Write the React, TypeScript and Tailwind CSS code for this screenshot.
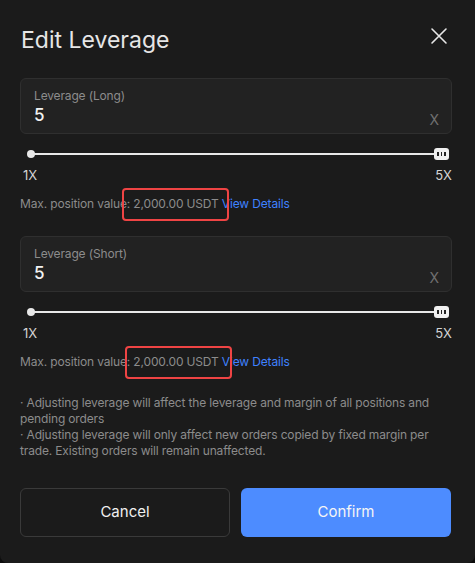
import React from "react";

function Slider() {
  return (
    <div className="relative h-[12px] mt-[14px] mx-[10px] mr-[3px]">
      <div className="absolute left-0 right-[4px] top-[5px] h-[2px] bg-[#e8e8e8]" />
      <div className="absolute left-[-3px] top-[2px] w-[8px] h-[8px] rounded-full bg-[#e8e8e8]" />
      <div className="absolute right-[0px] top-0 w-[15px] h-[12px] rounded-[3px] bg-[#f0f0f0] flex items-center justify-center gap-[2px]">
        <span className="w-[1.5px] h-[4px] bg-[#222]" />
        <span className="w-[1.5px] h-[4px] bg-[#222]" />
        <span className="w-[1.5px] h-[4px] bg-[#222]" />
      </div>
    </div>
  );
}

function Section({ label, redLeft }: { label: string; redLeft: number }) {
  return (
    <div>
      <div className="h-[56px] rounded-[6px] border border-[#2f2f2f] bg-[#222222] pl-[13px] pr-[12px] pt-[9px] flex flex-col">
        <div className="text-[12px] leading-[16px] text-[#8c8c8c] tracking-[-0.15px]">{label}</div>
        <div className="flex items-end justify-between">
          <span className="text-[17px] leading-[22px] font-medium text-[#f2f2f2]">5</span>
          <span className="text-[14px] leading-[16px] text-[#6f6f6f] mb-[-2px]">X</span>
        </div>
      </div>
      <Slider />
      <div className="flex justify-between mt-[7px] px-[3px] text-[13px] leading-[16px] text-[#d4d4d4]">
        <span>1X</span>
        <span className="mr-[-3px]">5X</span>
      </div>
      <div className="relative mt-[13px] text-[12px] leading-[16px] text-[#8c8c8c] tracking-[-0.15px]">
        Max. position value: 2,000.00 USDT <span className="text-[#3f82ff]">View Details</span>
        <div
          className="absolute top-[-8px] h-[33px] w-[107px] rounded-[4px] border-2 border-[#ef4444]"
          style={{ left: redLeft }}
        />
      </div>
    </div>
  );
}

export default function App() {
  return (
    <div
      className="w-[475px] h-[563px] bg-[#0d0d0d]"
      style={{ fontFamily: "Inter, 'Noto Sans', sans-serif" }}
    >
      <div className="w-[475px] h-[563px] bg-[#1b1b1b] rounded-b-[8px] pl-[20px] pr-[23px] flex flex-col">
        <div className="flex items-center justify-between pt-[20px] h-[60px]">
          <h1 className="text-[23px] leading-[30px] text-[#e6e6e6] pl-[1px]">Edit Leverage</h1>
          <svg width="18" height="18" viewBox="0 0 18 18" className="mr-[4px] mt-[-8px]">
            <path d="M2 2L16 16M16 2L2 16" stroke="#e8e8e8" strokeWidth="1.6" strokeLinecap="round" />
          </svg>
        </div>
        <div className="mt-[18px]">
          <Section label="Leverage (Long)" redLeft={102} />
        </div>
        <div className="mt-[24px]">
          <Section label="Leverage (Short)" redLeft={105} />
        </div>
        <div className="mt-[25px] text-[12px] leading-[16px] text-[#8c8c8c] tracking-[-0.15px]">
          <p>· Adjusting leverage will affect the leverage and margin of all positions and pending orders</p>
          <p>· Adjusting leverage will only affect new orders copied by fixed margin per trade. Existing orders will remain unaffected.</p>
        </div>
        <div className="mt-[29px] flex gap-[11px]">
          <button className="w-[210px] h-[49px] rounded-[6px] border border-[#3a3a3a] text-[15px] text-[#f0f0f0]">
            Cancel
          </button>
          <button className="w-[210px] h-[49px] rounded-[6px] bg-[#4d8cff] text-[15px] text-[#f5f5f5]">
            Confirm
          </button>
        </div>
      </div>
    </div>
  );
}
